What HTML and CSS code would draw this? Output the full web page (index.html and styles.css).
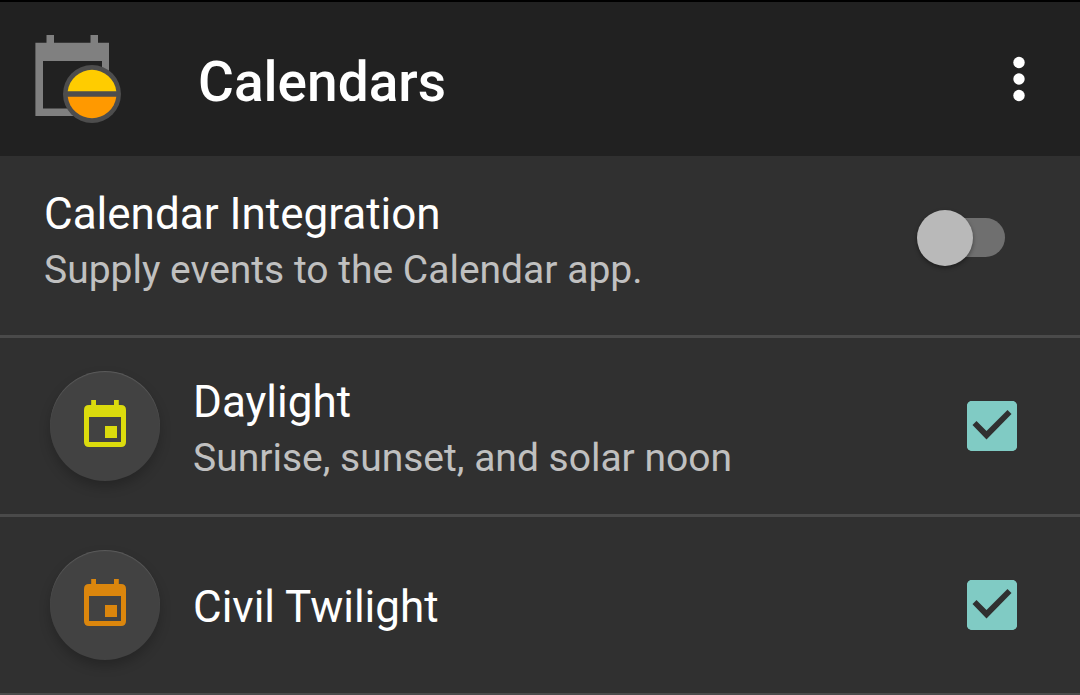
FILE: index.html
```html
<!DOCTYPE html>
<html lang="en">
<head>
<meta charset="utf-8">
<meta name="viewport" content="width=device-width, initial-scale=1">
<title>Calendars</title>
<link rel="stylesheet" href="styles.css">
</head>
<body>
<header class="app-bar">
  <svg class="app-icon" viewBox="0 -1 88 90" aria-hidden="true">
    <path fill="#808080" fill-rule="evenodd" d="M.4 7.700H11.500V0H19V7.700H55.500V0H63V7.700H74V81H.4zM8 26V73.500H67V26z"/>
    <circle cx="57" cy="59" r="29" fill="#4d4d4d"/>
    <path fill="#fc0" d="M32.700 56.200a24.500 24.500 0 0 1 48.600 0z"/>
    <path fill="#f90" d="M32.700 61.800a24.500 24.500 0 0 0 48.600 0z"/>
  </svg>
  <h1 class="app-title">Calendars</h1>
  <button class="menu-button" type="button" aria-label="More options">
    <svg class="menu-dots" viewBox="0 0 12 46" aria-hidden="true">
      <circle cx="6" cy="6.500" r="5.700"/><circle cx="6" cy="23" r="5.700"/><circle cx="6" cy="39.500" r="5.700"/>
    </svg>
  </button>
</header>
<main>
  <div class="row row-master">
    <label class="row-text" for="integration">
      <span class="row-title">Calendar Integration</span>
      <span class="row-summary">Supply events to the Calendar app.</span>
    </label>
    <input class="switch" type="checkbox" role="switch" id="integration">
  </div>
  <div class="row">
    <span class="badge badge-day">
      <svg class="badge-icon" viewBox="0 0 42 47" aria-hidden="true">
        <path fill-rule="evenodd" d="M7.200 0H12V5H30V0H34.800V5H37Q42 5 42 10V42Q42 47 37 47H5Q0 47 0 42V10Q0 5 5 5H7.200zM5 17V42H37V17z"/>
        <path d="M21 26H33V38H21z"/>
      </svg>
    </span>
    <label class="row-text" for="daylight">
      <span class="row-title">Daylight</span>
      <span class="row-summary">Sunrise, sunset, and solar noon</span>
    </label>
    <input class="check" type="checkbox" id="daylight" checked>
  </div>
  <div class="row">
    <span class="badge badge-civil">
      <svg class="badge-icon" viewBox="0 0 42 47" aria-hidden="true">
        <path fill-rule="evenodd" d="M7.200 0H12V5H30V0H34.800V5H37Q42 5 42 10V42Q42 47 37 47H5Q0 47 0 42V10Q0 5 5 5H7.200zM5 17V42H37V17z"/>
        <path d="M21 26H33V38H21z"/>
      </svg>
    </span>
    <label class="row-text" for="civil">
      <span class="row-title">Civil Twilight</span>
    </label>
    <input class="check" type="checkbox" id="civil" checked>
  </div>
</main>
</body>
</html>
```

FILE: styles.css
```css
* {
  box-sizing: border-box;
}

html {
  background: #303030;
}

body {
  margin: 0;
  overflow: hidden;
  color: #fff;
  font-family: Roboto, sans-serif;
}

.app-bar {
  display: flex;
  align-items: center;
  padding: 32px 36px 32px 35px;
  border-top: 2px solid #000;
  background: #212121;
}

.app-icon {
  width: 88px;
  height: 90px;
}

.app-title {
  flex: 1;
  margin: 0 0 0 75px;
  padding-top: 6px;
  font-size: 55px;
  line-height: 64px;
  font-weight: 500;
}

.menu-button {
  display: flex;
  justify-content: center;
  width: 50px;
  padding: 0;
  border: 0;
  background: none;
}

.menu-dots {
  width: 12px;
  height: 46px;
  fill: #fff;
}

.row {
  display: flex;
  align-items: center;
  gap: 33px;
  min-height: 179px;
  padding: 29px 63px 30px 50px;
  border-bottom: 3px solid #4a4a4a;
}

.row-master {
  padding: 23px 75px 39px 44px;
}

.row-text {
  flex: 1;
  padding-top: 5px;
}

.row-title,
.row-summary {
  display: block;
}

.row-title {
  font-size: 44px;
  line-height: 60px;
}

.row-summary {
  color: #c0c0c0;
  font-size: 39px;
  line-height: 52px;
}

.badge {
  display: flex;
  align-items: center;
  justify-content: center;
  width: 110px;
  height: 110px;
  padding-bottom: 4px;
  border-radius: 50%;
  background: #424242;
  box-shadow: 0 6px 12px rgba(0, 0, 0, 0.22), inset 0 1px 1px rgba(255, 255, 255, 0.14);
}

.badge-icon {
  width: 42px;
  height: 47px;
}

.badge-day {
  fill: #dbdb0d;
}

.badge-civil {
  fill: #db860d;
}

.switch,
.check {
  appearance: none;
  flex: none;
  margin: 0;
}

.switch {
  display: flex;
  align-items: center;
  position: relative;
  width: 88px;
  height: 56px;
}

.switch::before {
  content: "";
  position: absolute;
  inset: 8px 0 9px 10px;
  border-radius: 20px;
  background: #6f6f6f;
}

.switch::after {
  content: "";
  position: relative;
  width: 56px;
  height: 56px;
  border-radius: 50%;
  background: #b9b9b9;
  box-shadow: 0 2px 4px rgba(0, 0, 0, 0.4);
}

.switch:checked::after {
  margin-left: auto;
}

.check {
  width: 50px;
  height: 50px;
  border-radius: 5px;
  box-shadow: inset 0 0 0 4px #80cbc4;
}

.check:checked {
  background: #80cbc4;
}

.check:checked::before {
  content: "";
  display: block;
  height: 100%;
  background: #303030;
  clip-path: polygon(11% 49%, 19% 41%, 39% 61%, 81% 19%, 89% 27%, 39% 78%);
}
```
